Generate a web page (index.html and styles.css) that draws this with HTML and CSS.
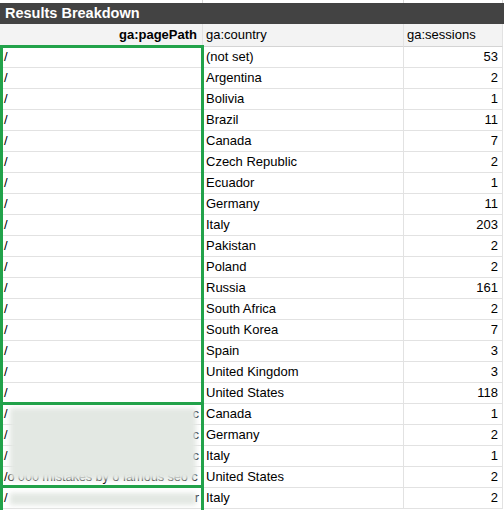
FILE: index.html
```html
<!DOCTYPE html>
<html>
<head>
<meta charset="utf-8">
<link rel="stylesheet" href="styles.css">
</head>
<body>
<div class="sheet">
  <div class="strip"><span></span><span></span><span></span></div>
  <div class="title">Results Breakdown</div>
  <div class="grid">
    <div class="cell hd c1 bold">ga:pagePath</div><div class="cell hd c2">ga:country</div><div class="cell hd c3">ga:sessions</div>
    <div class="cell c1">/</div><div class="cell c2">(not set)</div><div class="cell c3 num">53</div>
    <div class="cell c1">/</div><div class="cell c2">Argentina</div><div class="cell c3 num">2</div>
    <div class="cell c1">/</div><div class="cell c2">Bolivia</div><div class="cell c3 num">1</div>
    <div class="cell c1">/</div><div class="cell c2">Brazil</div><div class="cell c3 num">11</div>
    <div class="cell c1">/</div><div class="cell c2">Canada</div><div class="cell c3 num">7</div>
    <div class="cell c1">/</div><div class="cell c2">Czech Republic</div><div class="cell c3 num">2</div>
    <div class="cell c1">/</div><div class="cell c2">Ecuador</div><div class="cell c3 num">1</div>
    <div class="cell c1">/</div><div class="cell c2">Germany</div><div class="cell c3 num">11</div>
    <div class="cell c1">/</div><div class="cell c2">Italy</div><div class="cell c3 num">203</div>
    <div class="cell c1">/</div><div class="cell c2">Pakistan</div><div class="cell c3 num">2</div>
    <div class="cell c1">/</div><div class="cell c2">Poland</div><div class="cell c3 num">2</div>
    <div class="cell c1">/</div><div class="cell c2">Russia</div><div class="cell c3 num">161</div>
    <div class="cell c1">/</div><div class="cell c2">South Africa</div><div class="cell c3 num">2</div>
    <div class="cell c1">/</div><div class="cell c2">South Korea</div><div class="cell c3 num">7</div>
    <div class="cell c1">/</div><div class="cell c2">Spain</div><div class="cell c3 num">3</div>
    <div class="cell c1">/</div><div class="cell c2">United Kingdom</div><div class="cell c3 num">3</div>
    <div class="cell c1">/</div><div class="cell c2">United States</div><div class="cell c3 num">118</div>
    <div class="cell c1 split"><span>/</span><span>c</span></div><div class="cell c2">Canada</div><div class="cell c3 num">1</div>
    <div class="cell c1 split"><span>/</span><span>c</span></div><div class="cell c2">Germany</div><div class="cell c3 num">2</div>
    <div class="cell c1 split"><span>/</span><span>c</span></div><div class="cell c2">Italy</div><div class="cell c3 num">1</div>
    <div class="cell c1 tight">/o 000 mistakes by o famous seo c</div><div class="cell c2">United States</div><div class="cell c3 num">2</div>
    <div class="cell c1 split"><span>/</span><span>r</span></div><div class="cell c2">Italy</div><div class="cell c3 num">2</div>
  </div>
  <div class="blur blur-a"></div>
  <div class="blur blur-b"></div>
  <div class="sel sel-a"></div>
  <div class="sel sel-b"></div>
  <div class="sel sel-c"></div>
</div>
</body>
</html>
```
FILE: styles.css
```css
html, body {
  margin: 0;
  padding: 0;
  background: #ffffff;
  overflow: hidden;
}
.sheet {
  position: relative;
  width: 504px;
  height: 510px;
  overflow: hidden;
  font-family: "Liberation Sans", Arial, sans-serif;
  font-size: 13px;
  color: #000;
}
.strip {
  height: 3px;
  display: grid;
  grid-template-columns: 203px 201px 99px;
}
.strip span {
  border-right: 1px solid #d9d9d9;
  box-sizing: border-box;
}
.title {
  height: 21px;
  line-height: 21px;
  background: #434343;
  color: #ffffff;
  font-weight: bold;
  font-size: 14.5px;
  padding-left: 5px;
}
.grid {
  display: grid;
  grid-template-columns: 203px 201px 99px;
  grid-template-rows: 23px;
  grid-auto-rows: 21px;
}
.cell {
  box-sizing: border-box;
  border-right: 1px solid #e2e2e2;
  border-bottom: 1px solid #e2e2e2;
  line-height: 20px;
  padding: 0 4px 0 3px;
  white-space: nowrap;
  overflow: hidden;
}
.c1 { padding-left: 4px; }
.hd {
  background: #f3f3f3;
  line-height: 22px;
  border-bottom-color: #d4d4d4;
}
.c1.hd { text-align: right; padding-right: 5px; }
.bold { font-weight: bold; }
.num { text-align: right; padding-right: 4px; }
.split {
  display: flex;
  justify-content: space-between;
  padding-right: 3px;
}
.tight { letter-spacing: -0.2px; }
.blur {
  position: absolute;
  background: #e3e8e3;
  filter: blur(2.5px);
}
.blur-a {
  left: 10px;
  top: 408px;
  width: 186px;
  height: 72px;
}
.blur-b {
  left: 10px;
  top: 493px;
  width: 186px;
  height: 12px;
}
.sel {
  position: absolute;
  box-sizing: border-box;
  border: 3px solid #22a24a;
  left: 0;
  width: 204px;
}
.sel-a { top: 45px; height: 360px; }
.sel-b { top: 402px; height: 86px; }
.sel-c { top: 485px; height: 40px; }
```
